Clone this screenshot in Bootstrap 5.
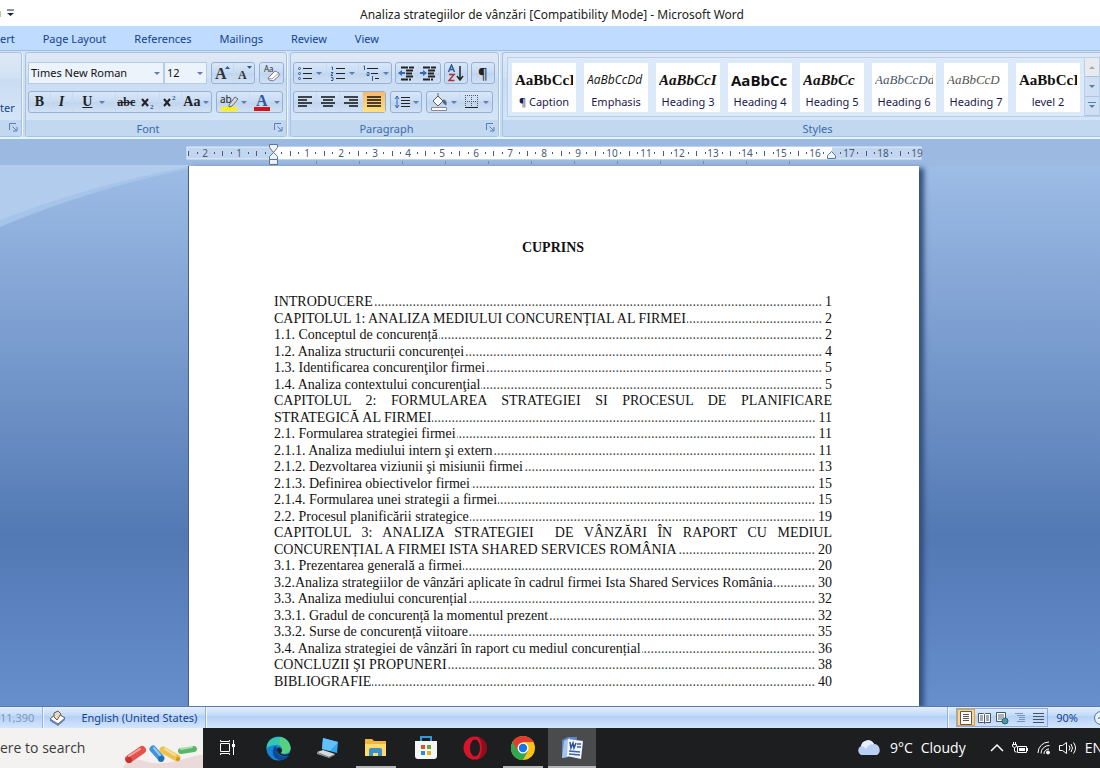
<!DOCTYPE html>
<html lang="ro">
<head>
<meta charset="utf-8">
<meta name="viewport" content="width=device-width, initial-scale=1">
<title>Analiza strategiilor de vânzări - Microsoft Word</title>
<link href="https://cdn.jsdelivr.net/npm/bootstrap@5.3.0/dist/css/bootstrap.min.css" rel="stylesheet">
<style>
  body { font-family: "Noto Sans", "Open Sans", sans-serif; font-size: 11px; line-height: 16px; color: #15428b; background: #fff; }
  button, select { font: inherit; color: inherit; }
  svg { display: block; flex: none; }
  .word-title { height: 26px; color: #222; font-size: 12px; }
  .word-tabs { height: 24px; padding-top: 2px; background: #bfdbff; gap: 28px; }
  .word-tabs a { color: #15428b; text-decoration: none; }
  .ribbon { height: 89px; padding-top: 1px; gap: 3px; background: linear-gradient(#d3e3f5, #c6daf0); border-bottom: 2px solid #e4f6fd; border-top: 1px solid #9dbde6; }
  .rgroup { border: 1px solid #a6c3e4; border-radius: 3px; background: linear-gradient(#dfe9f5, #d2e1f3 30%, #c9dcf2 31%, #d8e8f8); box-shadow: 1px 0 0 #eef5fc; height: 85px; overflow: hidden; }
  .rgroup .rbody { padding: 9px 2px 0; gap: 7px; flex: 1; }
  .rgroup footer { height: 16px; line-height: 18px; background: #c1d8f0; color: #3e6aaa; position: relative; text-align: center; }
  .launch { position: absolute; right: 3px; top: 3px; }
  .bset { height: 22px; border: 1px solid #94b0d5; border-radius: 3px; background: linear-gradient(#d9e7f8, #c7daf2 50%, #bfd4ee 51%, #d1e1f5); }
  .bset button { border: 0; background: none; padding: 0; height: 20px; flex: 1 1 0; display: flex; align-items: center; justify-content: center; gap: 3px; color: #222; border-right: 1px solid #c9daf0; }
  .bset button:last-child { border-right: 0; }
  .bset .wide { flex-grow: 2; }
  .bset .active-tool { background: linear-gradient(#f8b86a, #ffe080); }
  .drop { width: 0; height: 0; border: 3px solid transparent; border-top-color: #5b7fae; border-bottom: 0; }
  .combo { height: 22px; border: 1px solid #b3cceb; background: #ecf3fb url("data:image/svg+xml,%3Csvg xmlns='http://www.w3.org/2000/svg' width='6' height='3'%3E%3Cpath d='M0 0h6L3 3z' fill='%235b7fae'/%3E%3C/svg%3E") no-repeat right 3px center; appearance: none; padding: 0 2px; color: #111; border-radius: 0; }
  .tserif { font-family: "Liberation Serif", serif; font-weight: bold; font-size: 14px; }
  .gallery { gap: 8px; padding: 5px 4px; border: 1px solid #b9d0ea; background: #dce9f8; height: 60px; overflow: hidden; position: relative; }
  .tile { width: 64px; height: 49px; flex: none; background: #fff; border: 0; padding: 3px 3px 0; color: #1a1a4e; overflow: hidden; }
  .tile span { display: block; height: 26px; line-height: 24px; color: #111; overflow: hidden; white-space: nowrap; text-align: left; }
  .pv-serif { font-family: "Liberation Serif", serif; font-size: 15px; }
  .pv-thin { font-family: "Liberation Serif", serif; font-size: 13px; }
  .pv-sans { font-family: "Open Sans", sans-serif; font-size: 12px; }
  .pv-big { font-family: "Open Sans", sans-serif; font-size: 15px; }
  .scroller { position: absolute; right: 0; top: 0; bottom: 0; width: 15px; background: #dce9f8; display: flex; flex-direction: column; border-left: 1px solid #b9d0ea; }
  .scroller button { border: 0; border-bottom: 1px solid #a9c3e4; background: #cfe0f5; flex: 1; padding: 0; display: flex; align-items: center; justify-content: center; }
  .scroller button:first-child { background: #e8eaee; }
  .stage { background: linear-gradient(#9bb9e1 0 26px, #9dbce6 27px, #5379b4 70%, #668fcc); position: relative; overflow: hidden; padding-left: 7px; }
  .swoosh { position: absolute; left: 0; top: 26px; }
  .ruler-row { height: 27px; padding-top: 7px; position: relative; }
  .paper { width: 731px; max-width: 100%; position: relative; background: #fff; border-left: 1px solid #4c5f80; box-shadow: 5px 2px 5px #35507f; padding: 72px 87px 14px 85px; color: #111; font-family: "Liberation Serif", "Times New Roman", serif; font-size: 14px; flex: 1; }
  .paper h1 { font-size: 14px; font-weight: bold; line-height: 20px; margin: 0 0 36px; text-align: center; }
  .toc { line-height: 1.18; list-style: none; padding: 0; margin: 0; }
  .toc a { color: inherit; text-decoration: none; display: flex; white-space: nowrap; }
  .toc a i { flex: 1; overflow: hidden; display: flex; justify-content: flex-end; margin: 0 3px 0 1px; font-style: normal; color: #444; }
  .toc a i::before { content: "................................................................................................................................................................"; }
  .toc .spread { display: block; text-align: justify; text-align-last: justify; white-space: normal; }
  .statusbar { height: 22px; border-top: 1px solid #5d7ba8; background: linear-gradient(#e2eefc, #c3dbf8 40%, #b5d1f7 45%, #d5e5fb); }
  .statusbar > div { height: 21px; }
  .sdiv { border-right: 1px solid #94b4de; box-shadow: 1px 0 0 #eff6ff; }
  .lang { gap: 15px; padding: 0 8px 0 6px; }
  .views { border: 1px solid #8eabd3; }
  .views button { border: 0; background: none; width: 18px; height: 17px; padding: 0; display: flex; align-items: center; justify-content: center; }
  .views button:first-child { background: #fbd491; box-shadow: inset 0 0 0 1px #d9a450; }
  .taskbar { height: 40px; background: #1d1e20; color: #fff; font-size: 14px; font-family: "Open Sans", "Noto Sans", sans-serif; overflow: hidden; }
  .searchbox { width: 203px; background: #f3f2f1; color: #3b3b3b; overflow: hidden; }
  .searchbox input { border: 0; background: none; padding: 0; width: 120px; font: inherit; color: inherit; }
  .searchbox input::placeholder { color: #3b3b3b; opacity: 1; }
  .tapps button { border: 0; background: none; width: 49px; height: 40px; padding: 0; display: flex; align-items: center; justify-content: center; color: #fff; }
  .tapps button:first-child { width: 47px; }
  .tapps .is-open { box-shadow: inset 0 -2px 0 #b5b5b5; width: 40px; margin: 0 5px 0 4px; }
  .tapps .is-front { background: #4a4b4d; box-shadow: inset 0 -2px 0 #b5b5b5; width: 48px; }
  .tray { gap: 8px; margin-right: -3px; }
</style>
</head>
<body class="d-flex flex-column min-vh-100 overflow-hidden">

<header class="word-title d-flex align-items-center">
  <svg width="20" height="12" viewBox="0 0 20 12"><path d="M0 4v6" stroke="#b5cf8a" stroke-width="2"/><path d="M7 3h7" stroke="#223" /><path d="M7 6h7L10.500 9z" fill="#223"/></svg>
  <div class="flex-fill text-center pe-3 pt-1">Analiza strategiilor de vânzări [Compatibility Mode] - Microsoft Word</div>
</header>

<nav class="word-tabs d-flex align-items-center" aria-label="Ribbon">
  <a href="#">ert</a><a href="#">Page Layout</a><a href="#">References</a><a href="#">Mailings</a><a href="#">Review</a><a href="#">View</a>
</nav>

<section class="ribbon d-flex">
  <div class="rgroup d-flex flex-column border-start-0 rounded-start-0" style="width:22px">
    <div class="flex-fill d-flex align-items-end pb-1">ter</div>
    <footer><svg class="launch" width="9" height="9"><use href="#i-launch"/></svg></footer>
  </div>

  <div class="rgroup d-flex flex-column" style="width:262px">
    <div class="rbody d-flex flex-column">
      <div class="d-flex gap-1">
        <div class="d-flex"><select class="combo" style="width:136px" aria-label="Font"><option>Times New Roman</option></select><select class="combo" style="width:43px" aria-label="Font size"><option>12</option></select></div>
        <div class="bset d-flex" style="width:45px">
          <button aria-label="Grow font"><svg width="18" height="18"><text x="2" y="15" class="tserif" style="font-size:16px" fill="#333">A</text><path d="M12 5h5l-2.500-3z" fill="#2c5a9c"/></svg></button>
          <button aria-label="Shrink font"><svg width="18" height="18"><text x="3" y="15" class="tserif" style="font-size:12px" fill="#333">A</text><path d="M12 2h5l-2.500 3z" fill="#2c5a9c"/></svg></button>
        </div>
        <div class="bset d-flex" style="width:25px"><button aria-label="Clear formatting"><svg width="20" height="18"><text x="2" y="8" font-size="8" fill="#333">Aa</text><path d="M6 14l7-7 4 2v3l-6 5-4-1z" fill="#fff" stroke="#778"/><path d="M6 14l4 1 7-6" fill="none" stroke="#99a"/></svg></button></div>
      </div>
      <div class="d-flex gap-1">
        <div class="bset d-flex tserif" style="width:184px">
          <button>B</button><button class="fst-italic">I</button><button class="wide"><u>U</u><b class="drop ms-1"></b></button><button><s style="font-size:12px">abc</s></button>
          <button aria-label="Subscript"><svg width="16" height="16"><path d="M2 5l6 7M8 5l-6 7" stroke="#222" stroke-width="2"/><text x="10" y="15" font-size="7" fill="#2c5a9c">2</text></svg></button>
          <button aria-label="Superscript"><svg width="16" height="16"><path d="M2 5l6 7M8 5l-6 7" stroke="#222" stroke-width="2"/><text x="10" y="6" font-size="7" fill="#2c5a9c">2</text></svg></button>
          <button style="flex-grow:1.400">Aa<b class="drop"></b></button>
        </div>
        <div class="bset d-flex" style="width:67px">
          <button aria-label="Highlight"><svg width="18" height="19"><path d="M1 14h16v4H1z" fill="#fff200"/><text x="0" y="10" font-size="10" fill="#222">ab</text><path d="M9 12l6-8 3 2-6 7-3 1z" fill="#ddd" stroke="#667"/></svg><b class="drop"></b></button>
          <button aria-label="Font colour"><svg width="18" height="19"><text x="3" y="13" class="tserif" style="font-size:16px" fill="#2c5a9c">A</text><path d="M1 14h16v4H1z" fill="#d3121a"/></svg><b class="drop"></b></button>
        </div>
      </div>
    </div>
    <footer class="pe-3">Font<svg class="launch" width="9" height="9"><use href="#i-launch"/></svg></footer>
  </div>

  <div class="rgroup d-flex flex-column" style="width:209px">
    <div class="rbody d-flex flex-column">
      <div class="d-flex" style="gap:3px">
        <div class="bset d-flex" style="width:99px">
          <button aria-label="Bullets"><svg width="16" height="16"><path d="M6 3.500h9M6 8.500h9M6 13.500h9" stroke="#222"/><g fill="none" stroke="#2c5a9c"><circle cx="2.500" cy="3.500" r="1"/><circle cx="2.500" cy="8.500" r="1"/><circle cx="2.500" cy="13.500" r="1"/></g></svg><b class="drop"></b></button>
          <button aria-label="Numbering"><svg width="16" height="16"><path d="M6 3.500h9M6 8.500h9M6 13.500h9" stroke="#222"/><path d="M1.500 2h1v3M1 7.500h2l-2 3h2M1 12.500h2v3H1" fill="none" stroke="#2c5a9c"/></svg><b class="drop"></b></button>
          <button aria-label="Multilevel list"><svg width="18" height="16"><path d="M5 3.500h11M9 8.500h7M13 13.500h4" stroke="#222"/><path d="M1.500 1h1v4M5 7.500h2v3H5v-2M10.500 11v5" fill="none" stroke="#2c5a9c"/></svg><b class="drop"></b></button>
        </div>
        <div class="bset d-flex" style="width:46px">
          <button aria-label="Decrease indent"><svg width="18" height="16"><path d="M3 2.500h13M8 5.500h8M8 8.500h6M8 11.500h8M3 14.500h10" stroke="#222" stroke-width="2" stroke-dasharray="7 1"/><path d="M0 8l4-3v2h3v2H4v2z" fill="#3568b0"/></svg></button>
          <button aria-label="Increase indent"><svg width="18" height="16"><path d="M3 2.500h13M8 5.500h8M8 8.500h6M8 11.500h8M3 14.500h10" stroke="#222" stroke-width="2" stroke-dasharray="7 1"/><path d="M7 8L3 5v2H0v2h3v2z" fill="#3568b0"/></svg></button>
        </div>
        <div class="bset d-flex" style="width:24px"><button aria-label="Sort"><svg width="18" height="18" fill="none" stroke-width="1.500"><path d="M1.500 8L4.500 1l3 7M2.500 5.500h4" stroke="#2c5a9c"/><path d="M2 10.500h5l-5 6h5.500" stroke="#a33"/><path d="M13 2v13M10 12l3 4 3-4" stroke="#222"/></svg></button></div>
        <div class="bset d-flex" style="width:24px"><button style="font-size:15px">¶</button></div>
      </div>
      <div class="d-flex gap-1">
        <div class="bset d-flex" style="width:93px">
          <button aria-label="Align left"><svg width="16" height="14"><path d="M1 2h14M1 5h9M1 8h14M1 11h9" stroke="#111" stroke-width="1.500"/></svg></button>
          <button aria-label="Centre"><svg width="16" height="14"><path d="M1 2h14M3 5h10M1 8h14M3 11h10" stroke="#111" stroke-width="1.500"/></svg></button>
          <button aria-label="Align right"><svg width="16" height="14"><path d="M1 2h14M6 5h9M1 8h14M6 11h9" stroke="#111" stroke-width="1.500"/></svg></button>
          <button class="active-tool" aria-label="Justify"><svg width="16" height="14"><path d="M1 2h14M1 5h14M1 8h14M1 11h14" stroke="#111" stroke-width="1.500"/></svg></button>
        </div>
        <div class="bset d-flex" style="width:32px"><button aria-label="Line spacing"><svg width="16" height="16"><path d="M7 3.500h9M7 6.500h9M7 9.500h9M7 12.500h9" stroke="#222"/><path d="M3 2v12M1 5l2-3 2 3M1 11l2 3 2-3" fill="none" stroke="#3568b0"/></svg><b class="drop"></b></button></div>
        <div class="bset d-flex" style="width:67px">
          <button aria-label="Shading"><svg width="18" height="18"><path d="M3 8l5-5 5 5-5 5z" fill="#fff" stroke="#556"/><path d="M8 3V0M13 7c4 0 3 3 3 5-2-1-3-2-3-5z" fill="#3568b0" stroke="#667"/><path d="M1.500 14.500h15v3h-15z" fill="#fff" stroke="#889"/></svg><b class="drop"></b></button>
          <button aria-label="Borders"><svg width="16" height="16"><path d="M1.500 1v12M7.500 1v12M13.500 1v12M1 1.500h13M1 7.500h13" stroke="#556" stroke-dasharray="1 1"/><path d="M1 13.500h13" stroke="#222"/></svg><b class="drop"></b></button>
        </div>
      </div>
    </div>
    <footer class="pe-3">Paragraph<svg class="launch" width="9" height="9"><use href="#i-launch"/></svg></footer>
  </div>

  <div class="rgroup d-flex flex-column flex-fill border-end-0 rounded-end-0" style="width:0">
    <div class="flex-fill ps-1 pt-1">
      <div class="gallery d-flex">
        <button class="tile"><span class="pv-serif fw-bold">AaBbCcI</span>¶ Caption</button>
        <button class="tile"><span class="pv-sans fst-italic">AaBbCcDd</span>Emphasis</button>
        <button class="tile"><span class="pv-serif fw-bold fst-italic">AaBbCcI</span>Heading 3</button>
        <button class="tile"><span class="pv-big fw-bold">AaBbCc</span>Heading 4</button>
        <button class="tile"><span class="pv-serif fw-bold fst-italic">AaBbCc</span>Heading 5</button>
        <button class="tile"><span class="pv-thin fst-italic" style="color:#456">AaBbCcDd</span>Heading 6</button>
        <button class="tile"><span class="pv-thin fst-italic" style="color:#555">AaBbCcD</span>Heading 7</button>
        <button class="tile"><span class="pv-serif fw-bold">AaBbCcI</span>level 2</button>
        <div class="scroller">
          <button aria-label="Up"><svg width="6" height="3"><path d="M0 3h6L3 0z" fill="#aaa"/></svg></button>
          <button aria-label="Down"><b class="drop"></b></button>
          <button aria-label="More"><svg width="8" height="7"><path d="M0 .5h8" stroke="#5b7fae"/><path d="M1 3h6L4 6z" fill="#5b7fae"/></svg></button>
        </div>
      </div>
    </div>
    <footer style="padding-left:32px">Styles</footer>
  </div>
</section>

<main class="stage flex-fill d-flex flex-column align-items-center">
  <svg class="swoosh" width="188" height="64" viewBox="0 0 188 64"><path d="M0 0h188v4Q90 24 0 62z" fill="#a6c4ea"/><path d="M0 0h188v2Q90 20 0 55z" fill="#b1ccec"/></svg>
  <div class="ruler-row w-100 d-flex justify-content-center">
    <svg id="ruler" width="734" height="22" viewBox="0 0 734 22" role="img" aria-label="Ruler" overflow="visible"></svg>
  </div>
  <article class="paper">
    <h1>CUPRINS</h1>
    <ol class="toc">
      <li><a href="#">INTRODUCERE<i></i>1</a></li>
      <li><a href="#">CAPITOLUL 1: ANALIZA MEDIULUI CONCURENȚIAL AL FIRMEI<i></i>2</a></li>
      <li><a href="#">1.1. Conceptul de concurență<i></i>2</a></li>
      <li><a href="#">1.2. Analiza structurii concurenței<i></i>4</a></li>
      <li><a href="#">1.3. Identificarea concurenţilor firmei<i></i>5</a></li>
      <li><a href="#">1.4. Analiza contextului concurenţial<i></i>5</a></li>
      <li><a href="#" class="spread">CAPITOLUL 2: FORMULAREA STRATEGIEI SI PROCESUL DE PLANIFICARE</a><a href="#">STRATEGICĂ AL FIRMEI<i></i>11</a></li>
      <li><a href="#">2.1. Formularea strategiei firmei<i></i>11</a></li>
      <li><a href="#">2.1.1. Analiza mediului intern şi extern<i></i>11</a></li>
      <li><a href="#">2.1.2. Dezvoltarea viziunii şi misiunii firmei<i></i>13</a></li>
      <li><a href="#">2.1.3. Definirea obiectivelor firmei<i></i>15</a></li>
      <li><a href="#">2.1.4. Formularea unei strategii a firmei<i></i>15</a></li>
      <li><a href="#">2.2. Procesul planificării strategice<i></i>19</a></li>
      <li><a href="#" class="spread">CAPITOLUL 3: ANALIZA STRATEGIEI &nbsp;DE VÂNZĂRI ÎN RAPORT CU MEDIUL</a><a href="#">CONCURENȚIAL A FIRMEI ISTA SHARED SERVICES ROMÂNIA<i></i>20</a></li>
      <li><a href="#">3.1. Prezentarea generală a firmei<i></i>20</a></li>
      <li><a href="#">3.2.Analiza strategiilor de vânzări aplicate în cadrul firmei Ista Shared Services România<i></i>30</a></li>
      <li><a href="#">3.3. Analiza mediului concurențial<i></i>32</a></li>
      <li><a href="#">3.3.1. Gradul de concurență la momentul prezent<i></i>32</a></li>
      <li><a href="#">3.3.2. Surse de concurență viitoare<i></i>35</a></li>
      <li><a href="#">3.4. Analiza strategiei de vânzări în raport cu mediul concurențial<i></i>36</a></li>
      <li><a href="#">CONCLUZII ŞI PROPUNERI<i></i>38</a></li>
      <li><a href="#">BIBLIOGRAFIE<i></i>40</a></li>
    </ol>
  </article>
</main>

<div class="statusbar d-flex align-items-center">
  <div class="sdiv d-flex align-items-center pe-2" style="color:#7c98bf">11,390</div>
  <div class="sdiv lang d-flex align-items-center">
    <svg width="17" height="16"><path d="M1 9l7-6 8 5-7 6z" fill="#fff" stroke="#556"/><path d="M1 9l8 5v2L1 11zM9 14l7-6v2l-7 6z" fill="#6a86b5"/><path d="M5 3l4-2 3 3-4 6-3-3z" fill="#e9dcc0" stroke="#655"/></svg>
    <span>English (United States)</span>
  </div>
  <div class="sdiv flex-fill"></div>
  <div class="d-flex align-items-center ps-1 ms-1">
    <div class="views d-flex">
      <button aria-label="Print layout"><svg width="12" height="14"><path d="M.5.500h11v13H.5z" fill="#fff" stroke="#654"/><path d="M3 3.500h6M3 5.500h6M3 7.500h6M3 9.500h6" stroke="#555"/></svg></button>
      <button aria-label="Full screen reading"><svg width="13" height="12"><path d="M.5 1.500h5l1 1 1-1h5v9h-5l-1 1-1-1h-5z" fill="#fff" stroke="#456"/><path d="M2 4h3M2 6h3M2 8h3M8 4h3M8 6h3M8 8h3M6.500 3v8" stroke="#456"/></svg></button>
      <button aria-label="Web layout"><svg width="13" height="14"><path d="M.5 1.500h9v9h-9z" fill="#fff" stroke="#456"/><path d="M2 4h6M2 6h6M2 8h4" stroke="#567"/><circle cx="9" cy="10" r="3" fill="#4a9a9a" stroke="#2b5d8c"/></svg></button>
      <button aria-label="Outline"><svg width="12" height="12"><path d="M1 1.500h8M3 3.500h8M5 5.500h6M5 7.500h6M3 9.500h8" stroke="#7a93b8"/></svg></button>
      <button aria-label="Draft"><svg width="12" height="12"><path d="M1 1.500h11M1 4.500h11M1 7.500h11M1 10.500h11" stroke="#456"/></svg></button>
    </div>
    <span class="px-2">90%</span>
    <svg class="ms-2" width="6" height="16" overflow="hidden"><circle cx="7" cy="8" r="6.500" fill="#e8f0fb" stroke="#56709b"/><path d="M4 8h4" stroke="#456"/></svg>
  </div>
</div>

<footer class="taskbar d-flex">
  <label class="searchbox d-flex align-items-center">
    <input type="text" placeholder="ere to search" aria-label="Search">
    <svg class="align-self-end" width="83" height="30" viewBox="0 0 83 30">
      <path d="M3 30Q9 18 24 23T60 22T83 17V30z" fill="#eadada"/>
      <g stroke-linecap="round" stroke-width="8" fill="none"><path d="M9 21L22 12" stroke="#e5524b"/><path d="M61 13L74 11" stroke="#58b868" stroke-width="6"/><path d="M33 11L41 20" stroke="#3f95d8" stroke-width="7"/><path d="M43 12L57 20" stroke="#efc24c" stroke-width="7"/></g>
      <g stroke-linecap="round" stroke-width="2" fill="none" opacity=".5" stroke="#fff"><path d="M9 18L20 11M34 10L40 17M45 11L55 17M61 11L72 9"/></g>
      <circle cx="9" cy="22" r="3" fill="#bf332f"/><circle cx="41" cy="21" r="3" fill="#236fb0"/><circle cx="58" cy="21" r="2" fill="#c79a28"/>
    </svg>
  </label>
  <div class="tapps d-flex">
    <button aria-label="Task view"><svg width="18" height="18" fill="none" stroke="#fff"><path d="M2.500 4.500h9v8h-9zM2.500 1v1.500h9V1M2.500 16v-1.500h9V16M15.500 1v15"/><path d="M14 5h3v3h-3z" fill="#fff" stroke="none"/></svg></button>
    <button aria-label="Edge" class="ms-1"><svg width="25" height="25" viewBox="0 0 25 25"><circle cx="12.500" cy="12.500" r="12" fill="#1683d8"/><path d="M1 9C4-2 22-2 24.500 11c1 6-5 8-10 6 4-3 1-8-4-8-4 0-8 1-10 4z" fill="#35c6b0"/><path d="M14 1c7 1 11 7 10.500 12-1 5-7 5-10 4 3-2 2-6-1-8z" fill="#67d66b" opacity=".7"/><path d="M9 10c-5 6-1 14 6 14 3 0 7-2 8-5-5 3-12 1-12-5 0-2 0-3-2-4z" fill="#0b4a94"/><path d="M11 13c0 7 8 8 12 6l1-2c-3 2-7 2-9.500 0 1.500-1 1.500-2 1-4-2-2-4-2-4.500 0z" fill="#1d1e20"/></svg></button>
    <button aria-label="Remote desktop"><svg width="24" height="24" viewBox="0 0 24 24"><path d="M7 2l15 4-1 11L6 13z" fill="#35a7f2"/><path d="M7 2l15 4-8 9-8-2z" fill="#62c1fb"/><path d="M1 16l6-2 12 4-6 3z" fill="#d5dade"/><path d="M1 16l12 5v1L1 18zM13 21l6-3v1l-6 3z" fill="#8b969d"/></svg></button>
    <button aria-label="File Explorer" class="is-open"><svg width="22" height="20" viewBox="0 0 22 20"><path d="M0 1h7l2 2h12v15H0z" fill="#f0b73c"/><path d="M0 6h21v12H0z" fill="#ffdb6e"/><path d="M4 18v-6q0-2 2-2h9q2 0 2 2v6h-4v-3H8v3z" fill="#3d8fc4"/></svg></button>
    <button aria-label="Store"><svg width="24" height="24" viewBox="0 0 24 24"><path d="M7 5V1h10v4" fill="none" stroke="#2e9bd6" stroke-width="2"/><path d="M1 5h22v15q0 3-3 3H4q-3 0-3-3z" fill="#f4f6f8"/><path d="M7 9h4v4H7z" fill="#d9532c"/><path d="M13 9h4v4h-4z" fill="#78a22f"/><path d="M7 15h4v4H7z" fill="#2a8fd0"/><path d="M13 15h4v4h-4z" fill="#e8b11c"/></svg></button>
    <button aria-label="Opera"><svg width="24" height="24" viewBox="0 0 24 24"><circle cx="12" cy="12" r="11.500" fill="#d8142a"/><path d="M15 1c12 3 12 19 0 22 5-5 5-17 0-22z" fill="#8f0d1d"/><ellipse cx="12" cy="12" rx="5" ry="8.500" fill="#1d1e20"/></svg></button>
    <button aria-label="Chrome" class="is-open"><svg width="24" height="24" viewBox="0 0 24 24"><circle cx="12" cy="12" r="12" fill="#fbc116"/><path d="M1.600 6A12 12 0 0 0 12 24l5-9-5-3z" fill="#2da94f"/><path d="M1.600 6A12 12 0 0 1 22.400 6H12L7 15z" fill="#e33b2e"/><circle cx="12" cy="12" r="5.500" fill="#fff"/><circle cx="12" cy="12" r="4.200" fill="#1a73e8"/></svg></button>
    <button aria-label="Word" class="is-front"><svg width="24" height="24" viewBox="0 0 24 24"><path d="M2 4l6-3h9l-2 19-13 2z" fill="#5f86c8"/><path d="M4 5l6-3-2 19-6 1z" fill="#a9c2ea"/><path d="M8 3l15 2-2 18-14-3z" fill="#f3f6fc"/><path d="M10 6l1 6 2-5 1 5 2-5" fill="none" stroke="#2b4f94" stroke-width="1.500"/><path d="M17 8h4M17 11h4M9 15l11 1M9 18l11 1" stroke="#3a62ac" stroke-width="1.500"/></svg></button>
  </div>
  <div class="tray d-flex align-items-center ms-auto">
    <svg width="26" height="20" viewBox="0 0 26 20"><path d="M5 17a5 5 0 0 1 0-9 7 7 0 0 1 13-2 6 6 0 0 1 3 11z" fill="#b9d0f5"/><path d="M5 8a7 7 0 0 1 13-2q-6 0-8 5-2-3-5-3z" fill="#e8effc"/></svg>
    <span>9°C</span><span>Cloudy</span>
    <svg class="ms-3" width="14" height="10"><path d="M1 8l6-6 6 6" fill="none" stroke="#fff" stroke-width="1.500"/></svg>
    <svg width="17" height="14" fill="none" stroke="#fff"><path d="M5.500 5.500h9v6h-9zM2.500 7v3q0 1 2 1M.5 3.500h4v2q-2 2-4 0zM1.500 1v2M3.500 1v2"/><path d="M7 7h6v3H7zM15 7h1v3h-1z" fill="#fff" stroke="none"/></svg>
    <svg width="14" height="14" fill="none" stroke="#fff"><path d="M1 12A11 11 0 0 1 12 1M4 12.500A8 8 0 0 1 12.500 4.500M7 13a5 5 0 0 1 5-5"/><circle cx="11" cy="11.500" r="1.500" fill="#fff"/></svg>
    <svg width="18" height="14" fill="none" stroke="#fff"><path d="M.5 4.500h3l4-3v11l-4-3h-3zM10 4.500q2 2.500 0 5M12 3q3 4 0 8M14.500 1.500q4 5.500 0 11"/></svg>
    <span>EN</span>
  </div>
</footer>

<svg width="0" height="0" class="position-absolute"><symbol id="i-launch" viewBox="0 0 9 9"><path d="M.5 7V.500H7M3.500 3.500l4 4M8 4v4H4" fill="none" stroke="#5a7db0"/></symbol></svg>

<script src="https://cdn.jsdelivr.net/npm/bootstrap@5.3.0/dist/js/bootstrap.bundle.min.js"></script>
<script>
  // Ruler in centimetres: zero at the left margin, ticks every quarter.
  const cm = 33.87, zero = 86, end = 645, total = 734;
  let marks = `<rect x="0" y="1" width="${total}" height="12" fill="#c2d6f0" stroke="#e4eefa"/><rect x="${zero}" y="1" width="${end - zero}" height="12" fill="#fff"/>`;
  for (let q = -10; q <= 76; q++) {
    const x = Math.round(zero + q * cm / 4);
    if (x < 0 || x > total || q === 0 || Math.abs(x - end) < 5) continue;
    if (q % 4 === 0) marks += `<text x="${x}" y="11" text-anchor="middle" font-size="10" fill="#4a5a78">${Math.abs(q / 4)}</text>`;
    else if (q % 2 === 0) marks += `<path d="M${x}.5 5v5" stroke="#4a5a78"/>`;
    else marks += `<path d="M${x}.5 6v2" stroke="#4a5a78"/>`;
  }
  for (let x = zero + 43; x < end; x += 43) marks += `<path d="M${x}.5 15v3" stroke="#6f8fbd"/>`;
  marks += `<g fill="#eef3fa" stroke="#5f7493"><path d="M82.500-1.500h8v3l-4 5-4-5zM82.500 13.500v-3l4-4 4 4v3zM82.500 13.500h8v5h-8zM640.500 12.500v-3l4-4 4 4v3z"/></g>`;
  document.getElementById('ruler').innerHTML = marks;
</script>
</body>
</html>
